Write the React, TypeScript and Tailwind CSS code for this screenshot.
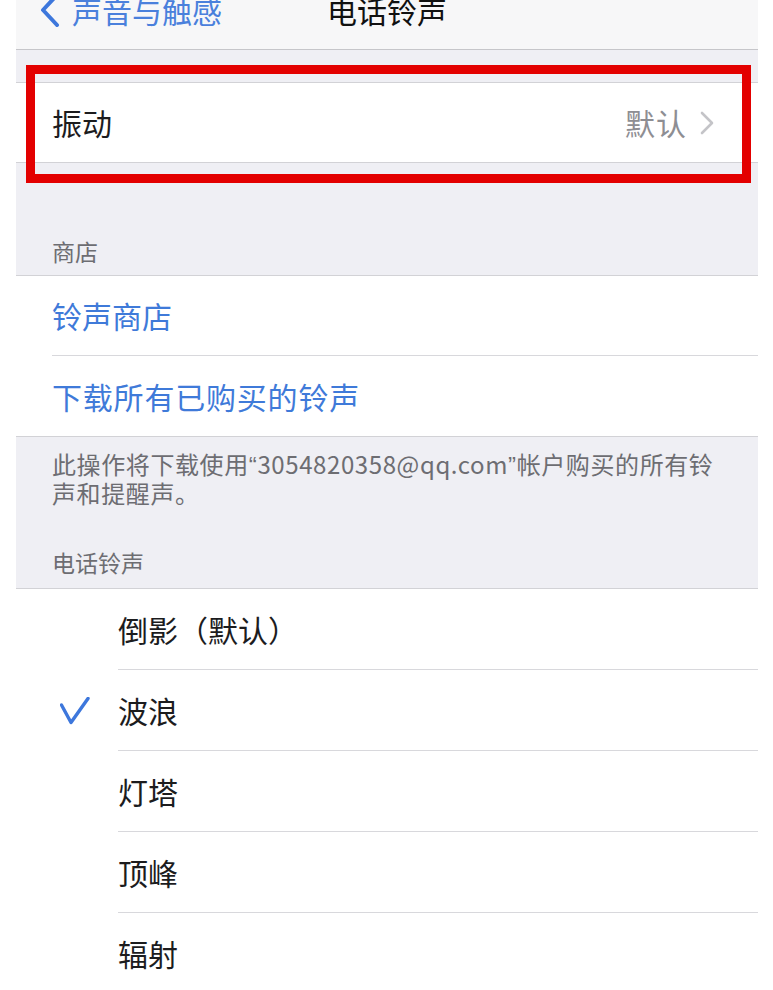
import React from 'react';

const font = { fontFamily: '"Noto Sans CJK SC", "Noto Sans", sans-serif' };

const Check: React.FC = () => (
  <svg width="30" height="28" viewBox="0 0 30 28" className="shrink-0">
    <path d="M1.5 8 L11 25.5 L28 1.5" fill="none" stroke="#3d77dc" strokeWidth="3.4" strokeLinecap="round" strokeLinejoin="round" />
  </svg>
);

const ringtones = ['倒影（默认）', '波浪', '灯塔', '顶峰', '辐射'];

const App: React.FC = () => {
  return (
    <div className="w-[773px] h-[990px] bg-white overflow-hidden relative" style={font}>
      <div className="ml-[16px] w-[742px] bg-[#efeff4] min-h-[990px]">
        {/* nav bar */}
        <div className="h-[50px] bg-[#f7f7f8] border-b border-[#c6c6ca] relative">
          <div className="absolute left-[23px] top-[-8px] flex items-center">
            <svg width="22" height="34" viewBox="0 0 22 34">
              <path d="M18 2 L4 17 L18 32" fill="none" stroke="#3d77dc" strokeWidth="4" strokeLinecap="round" strokeLinejoin="round" />
            </svg>
            <span className="ml-[11px] text-[30px] leading-[36px] text-[#4a80dc]">声音与触感</span>
          </div>
          <div className="absolute left-0 right-0 top-[-8px] text-center text-[30px] leading-[36px] text-[#111]">电话铃声</div>
        </div>

        <div className="h-[32px]" />

        {/* vibration row */}
        <div className="h-[81px] bg-white border-y border-[#d2d2d6] flex items-center pl-[36px] pr-[44px]">
          <span className="text-[30px] text-[#1c1c1e] flex-1">振动</span>
          <span className="text-[30px] text-[#8e8e93] tracking-[1px]">默认</span>
          <svg width="14" height="24" viewBox="0 0 14 24" className="ml-[13px]">
            <path d="M2 2 L12 12 L2 22" fill="none" stroke="#c4c4c8" strokeWidth="2.6" strokeLinecap="round" strokeLinejoin="round" />
          </svg>
        </div>

        {/* store header */}
        <div className="pt-[74px] pb-[10px] pl-[36px] text-[23px] leading-[28px] text-[#6d6d72]">商店</div>

        <div className="bg-white border-y border-[#d2d2d6]">
          <div className="pl-[36px]">
            <div className="h-[80px] flex items-center border-b border-[#d8d8dc] text-[30px] text-[#3f7ad9]">铃声商店</div>
          </div>
          <div className="h-[80px] flex items-center pl-[36px] text-[30px] text-[#3f7ad9] tracking-[0.8px]">下载所有已购买的铃声</div>
        </div>

        {/* footer */}
        <div className="pt-[13px] pl-[36px] pr-[20px] text-[24px] leading-[27px] text-[#6d6d72] tracking-[0.6px] whitespace-nowrap">
          此操作将下载使用<span className="font-['Liberation_Sans']">“</span>3054820358@qq.com<span className="font-['Liberation_Sans']">”</span>帐户购买的所有铃
          <br />
          声和提醒声。
        </div>

        <div className="pt-[42px] pb-[12px] pl-[36px] text-[23px] leading-[28px] text-[#6d6d72]">电话铃声</div>

        <div className="bg-white border-t border-[#d2d2d6]">
          {ringtones.map((name, i) => (
            <div key={name} className="flex">
              <div className="w-[102px] flex items-center pl-[44px]">{i === 1 && <Check />}</div>
              <div className={`flex-1 h-[81px] flex items-center text-[30px] text-[#1c1c1e] ${i < ringtones.length - 1 ? 'border-b border-[#d8d8dc]' : ''}`}>
                {name}
              </div>
            </div>
          ))}
        </div>
      </div>

      {/* red highlight annotation */}
      <div className="absolute left-[26px] top-[65px] w-[725px] h-[118px] border-[9px] border-[#e30000]" />
    </div>
  );
};

export default App;
